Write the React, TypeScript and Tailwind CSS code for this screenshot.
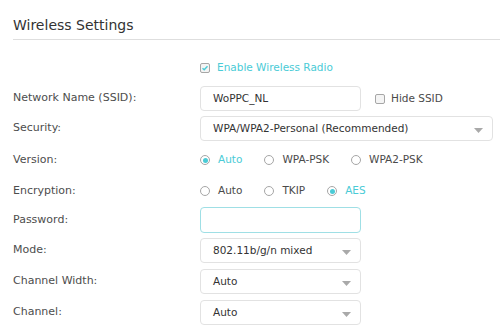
import React from 'react';

const teal = 'text-[#4acbd6]';

const Arrow = () => (
  <svg width="9" height="5" viewBox="0 0 9 5" className="absolute right-[9px] top-[11px]">
    <path d="M0 0 H9 L4.5 5 Z" fill="#a9a9a9" />
  </svg>
);

const Check = ({ checked }: { checked?: boolean }) => (
  <span className="flex h-[10px] w-[10px] shrink-0 items-center justify-center rounded-[2px] border border-[#a6a6a6] bg-[#f4f4f4]">
    {checked && (
      <svg width="8" height="8" viewBox="0 0 8 8">
        <path d="M1.5 4.2 L3.2 5.8 L6.5 2.2" fill="none" stroke="#4acbd6" strokeWidth="1.4" />
      </svg>
    )}
  </span>
);

const Radio = ({ label, on }: { label: string; on?: boolean }) => (
  <label className="mr-[22px] flex items-center gap-[8px]">
    <span className="flex h-[10px] w-[10px] items-center justify-center rounded-full border border-[#a6a6a6] bg-white">
      {on && <span className="h-[5px] w-[5px] rounded-full bg-[#4acbd6]" />}
    </span>
    <span className={on ? teal : 'text-[#4a4a4a]'}>{label}</span>
  </label>
);

const Select = ({ value, wide }: { value: string; wide?: boolean }) => (
  <div
    className={`relative flex h-[25px] items-center rounded-[4px] border border-[#e2e2e2] bg-white pl-[12px] text-[#333] ${
      wide ? 'w-[293px]' : 'w-[161px]'
    }`}
  >
    {value}
    <Arrow />
  </div>
);

const Row = ({ label, className, children }: { label?: string; className: string; children: React.ReactNode }) => (
  <div className={`flex items-center ${className}`}>
    <div className="w-[187px] shrink-0 text-[11px] text-[#4d4d4d]">{label}</div>
    <div className="flex items-center">{children}</div>
  </div>
);

export default function App() {
  return (
    <div
      className="h-[330px] w-[500px] overflow-hidden bg-white pl-[13px] text-[10.5px]"
      style={{ fontFamily: '"DejaVu Sans", Verdana, sans-serif' }}
    >
      <h1 className="pt-[16px] text-[14px] leading-[18px] text-[#333]">Wireless Settings</h1>
      <div className="mt-[5px] h-px bg-[#dedede]" />

      <Row className="mt-[15px] h-[25px]">
        <label className="flex items-center gap-[7px]">
          <Check checked />
          <span className={teal}>Enable Wireless Radio</span>
        </label>
      </Row>

      <Row label="Network Name (SSID):" className="mt-[6px] h-[25px]">
        <div className="flex h-[25px] w-[161px] items-center rounded-[4px] border border-[#e2e2e2] pl-[12px] text-[#333]">
          WoPPC_NL
        </div>
        <label className="ml-[14px] flex items-center gap-[6px] text-[#4a4a4a]">
          <Check />
          Hide SSID
        </label>
      </Row>

      <Row label="Security:" className="mt-[5px] h-[25px]">
        <Select value="WPA/WPA2-Personal (Recommended)" wide />
      </Row>

      <Row label="Version:" className="mt-[6px] h-[26px]">
        <Radio label="Auto" on />
        <Radio label="WPA-PSK" />
        <Radio label="WPA2-PSK" />
      </Row>

      <Row label="Encryption:" className="mt-[5px] h-[26px]">
        <Radio label="Auto" />
        <Radio label="TKIP" />
        <Radio label="AES" on />
      </Row>

      <Row label="Password:" className="mt-[3px] h-[26px]">
        <div className="h-[26px] w-[161px] rounded-[4px] border border-[#9fdfe5] bg-white" />
      </Row>

      <Row label="Mode:" className="mt-[5px] h-[25px]">
        <Select value="802.11b/g/n mixed" />
      </Row>

      <Row label="Channel Width:" className="mt-[6px] h-[25px]">
        <Select value="Auto" />
      </Row>

      <Row label="Channel:" className="mt-[6px] h-[25px]">
        <Select value="Auto" />
      </Row>
    </div>
  );
}
